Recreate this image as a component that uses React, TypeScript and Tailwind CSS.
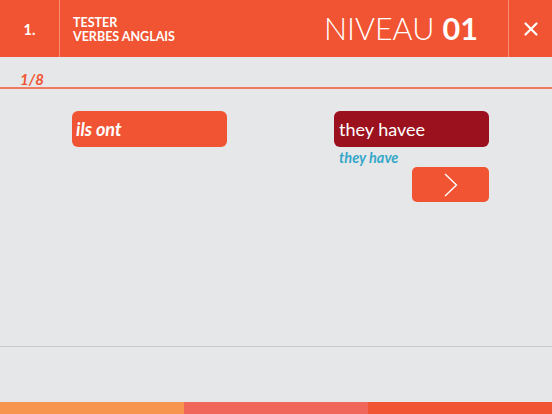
import { X } from 'lucide-react';

const font = { fontFamily: 'Lato, "Open Sans", sans-serif' };

export default function App() {
  return (
    <div className="h-[414px] w-[552px] flex flex-col bg-[#e6e7e8] overflow-hidden" style={font}>
      {/* header */}
      <div className="h-[57px] flex bg-[#f05432] text-white">
        <div className="w-[60px] flex items-center justify-center pt-[3px] border-r border-[#f68e76] text-[14.5px] font-bold">
          1.
        </div>
        <div className="flex-1 flex items-center pl-[13px]">
          <div className="text-[12.5px] font-bold leading-[14px] uppercase pt-[2px]">
            <div>Tester</div>
            <div>Verbes anglais</div>
          </div>
          <div className="ml-auto mr-[30px] text-[30.5px] font-light leading-none">
            NIVEAU <span className="font-bold">01</span>
          </div>
        </div>
        <div className="w-[44px] flex items-center justify-center border-l border-[#f68e76]">
          <X className="w-[22px] h-[22px]" strokeWidth={2.4} />
        </div>
      </div>

      {/* progress */}
      <div className="h-[32px] border-b-2 border-[#f17a63] pl-[20px] pt-[15px]">
        <div className="text-[15px] leading-[15px] font-bold italic text-[#f05432]">1/8</div>
      </div>

      {/* exercise */}
      <div className="flex-1 flex pt-[22px] pl-[72px] pr-[63px]">
        <div className="w-[155px] h-[36px] rounded-[6px] bg-[#f05432] flex items-center pl-[4px]">
          <span className="text-[18px] font-bold italic text-white">ils ont</span>
        </div>
        <div className="ml-auto w-[155px] flex flex-col items-stretch">
          <div className="h-[36px] rounded-[6px] bg-[#9b111e] flex items-center pl-[5px]">
            <span className="text-[18px] text-white">they havee</span>
          </div>
          <div className="pl-[5px] mt-[2px] h-[18px] text-[14.5px] font-bold italic text-[#35a8ca] leading-[18px]">
            they have
          </div>
          <div className="self-end w-[77px] h-[35px] rounded-[5px] bg-[#f05432] flex items-center justify-center">
            <svg width="14" height="24" viewBox="0 0 14 24" fill="none">
              <polyline points="1,1 12.5,12 1,23" stroke="white" strokeWidth="1.4" />
            </svg>
          </div>
        </div>
      </div>

      <div className="h-px bg-[#c9cacc]" />
      <div className="h-[55px]" />

      {/* bottom bar */}
      <div className="h-[12px] flex">
        <div className="w-[184px] bg-[#f7954f]" />
        <div className="w-[184px] bg-[#f0665a]" />
        <div className="flex-1 bg-[#f05432]" />
      </div>
    </div>
  );
}
